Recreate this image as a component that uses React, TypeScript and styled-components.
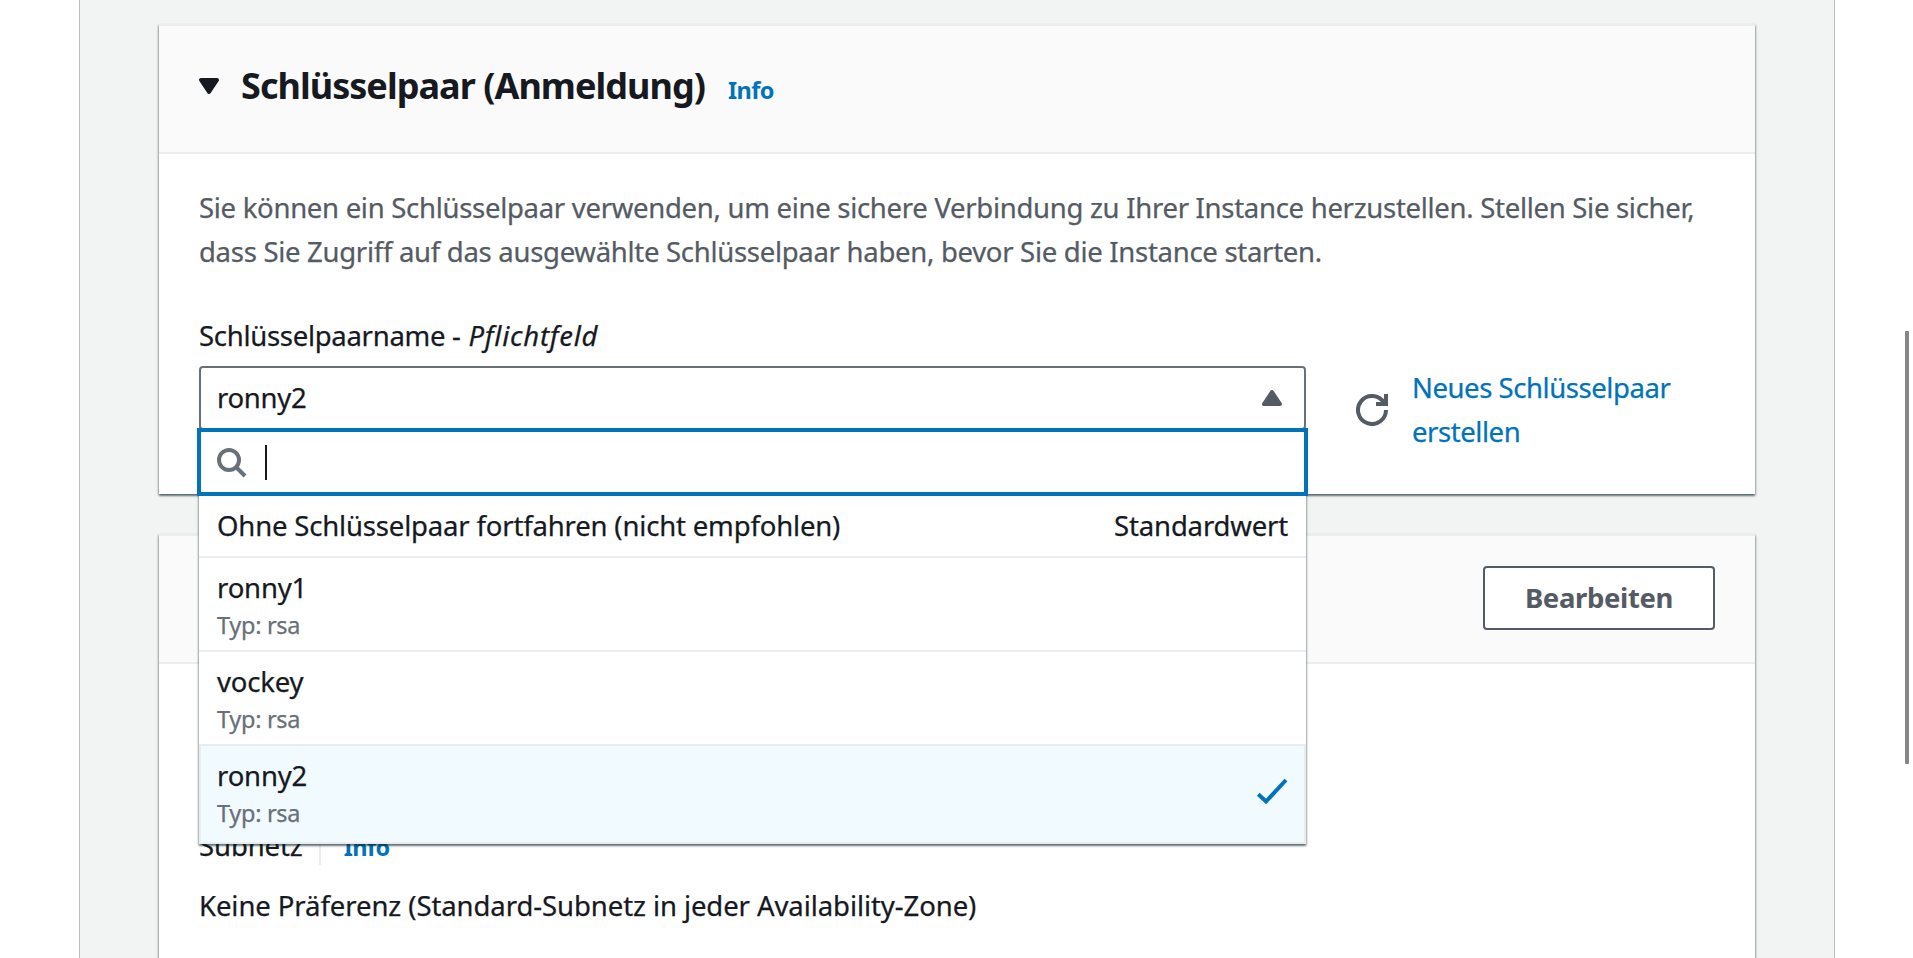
import React from "react";
import styled, { createGlobalStyle, css } from "styled-components";

const color = {
  text: "#16191f",
  secondary: "#545b64",
  muted: "#687078",
  link: "#0073bb",
  divider: "#eaeded",
  layout: "#f2f3f3",
  header: "#fafafa",
  selected: "#f1faff",
};

const GlobalStyle = createGlobalStyle`
  * { box-sizing: border-box; }
  body {
    margin: 0;
    background: #fff;
    color: ${color.text};
    font-family: "Noto Sans", "Open Sans", sans-serif;
    font-size: 27.5px;
    line-height: 44px;
    letter-spacing: -0.29px;
    -webkit-text-stroke: 0.25px;
    overflow: hidden;
  }
`;

const elevation = css`
  box-shadow: 0 2px 2px 0 rgba(0, 28, 36, 0.5), 1px 1px 2px 0 rgba(0, 28, 36, 0.2),
    -1px 1px 2px 0 rgba(0, 28, 36, 0.2);
`;

const Viewport = styled.div`
  position: relative;
  height: 958px;
  overflow: hidden;
  padding: 0 78px 0 79px;
`;

const Content = styled.main`
  display: flex;
  flex-direction: column;
  gap: 40px;
  height: 958px;
  padding: 24px 79px 0;
  background: ${color.layout};
  border-left: 1px solid #b8bfc2;
  border-right: 1px solid #b8bfc2;
`;

const Card = styled.section<{ $grow?: boolean }>`
  flex: none;
  height: ${(p) => (p.$grow ? "460px" : "470px")};
  background: #fff;
  border-top: 2px solid ${color.divider};
  ${elevation}
`;

const CardHeader = styled.header<{ $end?: boolean }>`
  display: flex;
  align-items: center;
  justify-content: ${(p) => (p.$end ? "flex-end" : "flex-start")};
  height: 128px;
  padding: 0 40px 2px ${(p) => (p.$end ? 40 : 34)}px;
  background: ${color.header};
  border-bottom: 2px solid ${color.divider};
`;

const CardBody = styled.div<{ $top?: number }>`
  padding: ${(p) => p.$top ?? 32}px 40px 0;
`;

const TitleRow = styled.div`
  display: flex;
  align-items: baseline;
  margin-left: 16px;
`;

const Title = styled.h2`
  margin: 0 23px 0 0;
  font-size: 36px;
  font-weight: 700;
  letter-spacing: -0.96px;
  -webkit-text-stroke: 0;
`;

const InfoLink = styled.a`
  color: ${color.link};
  font-size: 23.5px;
  font-weight: 700;
  letter-spacing: -0.6px;
  -webkit-text-stroke: 0;
`;

const Description = styled.p`
  margin: 0 0 40px;
  color: ${color.secondary};
`;

const Label = styled.div`
  margin-bottom: 8px;
`;

const Required = styled.i`
  margin-left: 1px;
  letter-spacing: 0.75px;
  font-variant-ligatures: none;
`;

const FieldRow = styled.div`
  display: flex;
  align-items: flex-start;
`;

const SelectWrap = styled.div`
  position: relative;
  width: 1107px;
`;

const SelectTrigger = styled.div`
  display: flex;
  align-items: center;
  justify-content: space-between;
  height: 64px;
  padding: 0 16px;
  background: #fff;
  border: 2px solid ${color.muted};
  border-radius: 4px;
`;

const Dropdown = styled.div`
  position: absolute;
  z-index: 2;
  top: 62px;
  left: 0;
  width: 100%;
  background: #fff;
  letter-spacing: -0.17px;
  ${elevation}
`;

const SearchBox = styled.div`
  display: flex;
  align-items: center;
  height: 68px;
  margin: 0 -2px;
  padding: 0 14px;
  background: #fff;
  border: 4px solid ${color.link};
`;

const Cursor = styled.span`
  width: 2px;
  height: 35px;
  margin: 1px 0 0 18px;
  background: ${color.text};
`;

const Option = styled.div<{ $selected?: boolean }>`
  display: flex;
  align-items: center;
  justify-content: space-between;
  padding: 8px 18px;
  border-bottom: 2px solid ${color.divider};
  ${(p) =>
    p.$selected &&
    css`
      padding: 8px 16px 12px;
      background: ${color.selected};
      border: 2px solid ${color.divider};
      border-top: 0;
    `}
`;

const OptionDescription = styled.div`
  padding-bottom: 2px;
  color: ${color.muted};
  font-size: 23.5px;
  line-height: 30px;
  letter-spacing: -0.3px;
`;

const RefreshButton = styled.span`
  display: flex;
  align-items: center;
  height: 88px;
  margin: 0 24px 0 50px;
`;

const CreateLink = styled.a`
  width: 280px;
  color: ${color.link};
  letter-spacing: -0.44px;
`;

const EditButton = styled.button`
  width: 232px;
  height: 64px;
  padding: 0;
  color: ${color.secondary};
  background: #fff;
  border: 2px solid ${color.secondary};
  border-radius: 4px;
  font: 700 27.5px/44px "Noto Sans", "Open Sans", sans-serif;
  letter-spacing: -0.35px;
  -webkit-text-stroke: 0;
`;

const SubnetLabel = styled.div`
  display: flex;
  align-items: baseline;
  margin-bottom: 15px;
`;

const SubnetName = styled.span`
  padding-right: 16px;
  letter-spacing: -0.1px;
`;

const SubnetValue = styled.div`
  letter-spacing: -0.08px;
`;

const LabelDivider = styled.span`
  align-self: center;
  width: 2px;
  height: 36px;
  margin-right: 23px;
  background: ${color.divider};
`;

const ScrollThumb = styled.div`
  position: absolute;
  top: 331px;
  right: 4px;
  width: 4px;
  height: 433px;
  background: #868686;
  border-radius: 1px;
`;

const Glyph = styled.svg<{ $tone: string; $filled?: boolean }>`
  flex: none;
  width: 32px;
  height: 32px;
  fill: ${(p) => (p.$filled ? p.$tone : "none")};
  stroke: ${(p) => p.$tone};
  stroke-width: 2;
  stroke-linejoin: ${(p) => (p.$filled ? "round" : "miter")};
`;

const HeaderCaret = styled(Glyph)`
  margin-bottom: 4px;
`;

const keyPairs = [
  { name: "ronny1", type: "Typ: rsa" },
  { name: "vockey", type: "Typ: rsa" },
  { name: "ronny2", type: "Typ: rsa", selected: true },
];

export default function App() {
  return (
    <Viewport>
      <GlobalStyle />
      <Content>
        <Card>
          <CardHeader>
            <HeaderCaret viewBox="0 0 16 16" $tone={color.text} $filled>
              <path d="M4 5h8l-4 6z" />
            </HeaderCaret>
            <TitleRow>
              <Title>Schlüsselpaar (Anmeldung)</Title>
              <InfoLink>Info</InfoLink>
            </TitleRow>
          </CardHeader>
          <CardBody>
            <Description>
              Sie können ein Schlüsselpaar verwenden, um eine sichere Verbindung zu Ihrer Instance herzustellen. Stellen Sie sicher,
              <br />
              dass Sie Zugriff auf das ausgewählte Schlüsselpaar haben, bevor Sie die Instance starten.
            </Description>
            <Label>
              Schlüsselpaarname - <Required>Pflichtfeld</Required>
            </Label>
            <FieldRow>
              <SelectWrap>
                <SelectTrigger>
                  <span>ronny2</span>
                  <Glyph viewBox="0 0 16 16" $tone={color.secondary} $filled>
                    <path d="M4 11h8L8 5z" />
                  </Glyph>
                </SelectTrigger>
                <Dropdown>
                  <SearchBox>
                    <Glyph viewBox="0 0 16 16" $tone={color.muted}>
                      <circle cx="7" cy="7" r="5" />
                      <path d="m15 15-4.5-4.5" />
                    </Glyph>
                    <Cursor />
                  </SearchBox>
                  <Option>
                    <span>Ohne Schlüsselpaar fortfahren (nicht empfohlen)</span>
                    <span>Standardwert</span>
                  </Option>
                  {keyPairs.map((pair) => (
                    <Option key={pair.name} $selected={pair.selected}>
                      <div>
                        <div>{pair.name}</div>
                        <OptionDescription>{pair.type}</OptionDescription>
                      </div>
                      {pair.selected && (
                        <Glyph viewBox="0 0 16 16" $tone={color.link}>
                          <path d="M1.15 9.15 5 12.75 15 2" />
                        </Glyph>
                      )}
                    </Option>
                  ))}
                </Dropdown>
              </SelectWrap>
              <RefreshButton>
                <Glyph viewBox="0 0 16 16" $tone={color.secondary}>
                  <path d="M15 8a7 7 0 1 1-1-3.6" />
                  <path d="M15 0v5h-5" />
                </Glyph>
              </RefreshButton>
              <CreateLink>
                Neues Schlüsselpaar
                <br />
                erstellen
              </CreateLink>
            </FieldRow>
          </CardBody>
        </Card>
        <Card $grow>
          <CardHeader $end>
            <EditButton>Bearbeiten</EditButton>
          </CardHeader>
          <CardBody $top={160}>
            <SubnetLabel>
              <SubnetName>Subnetz</SubnetName>
              <LabelDivider />
              <InfoLink>Info</InfoLink>
            </SubnetLabel>
            <SubnetValue>Keine Präferenz (Standard-Subnetz in jeder Availability-Zone)</SubnetValue>
          </CardBody>
        </Card>
      </Content>
      <ScrollThumb />
    </Viewport>
  );
}
